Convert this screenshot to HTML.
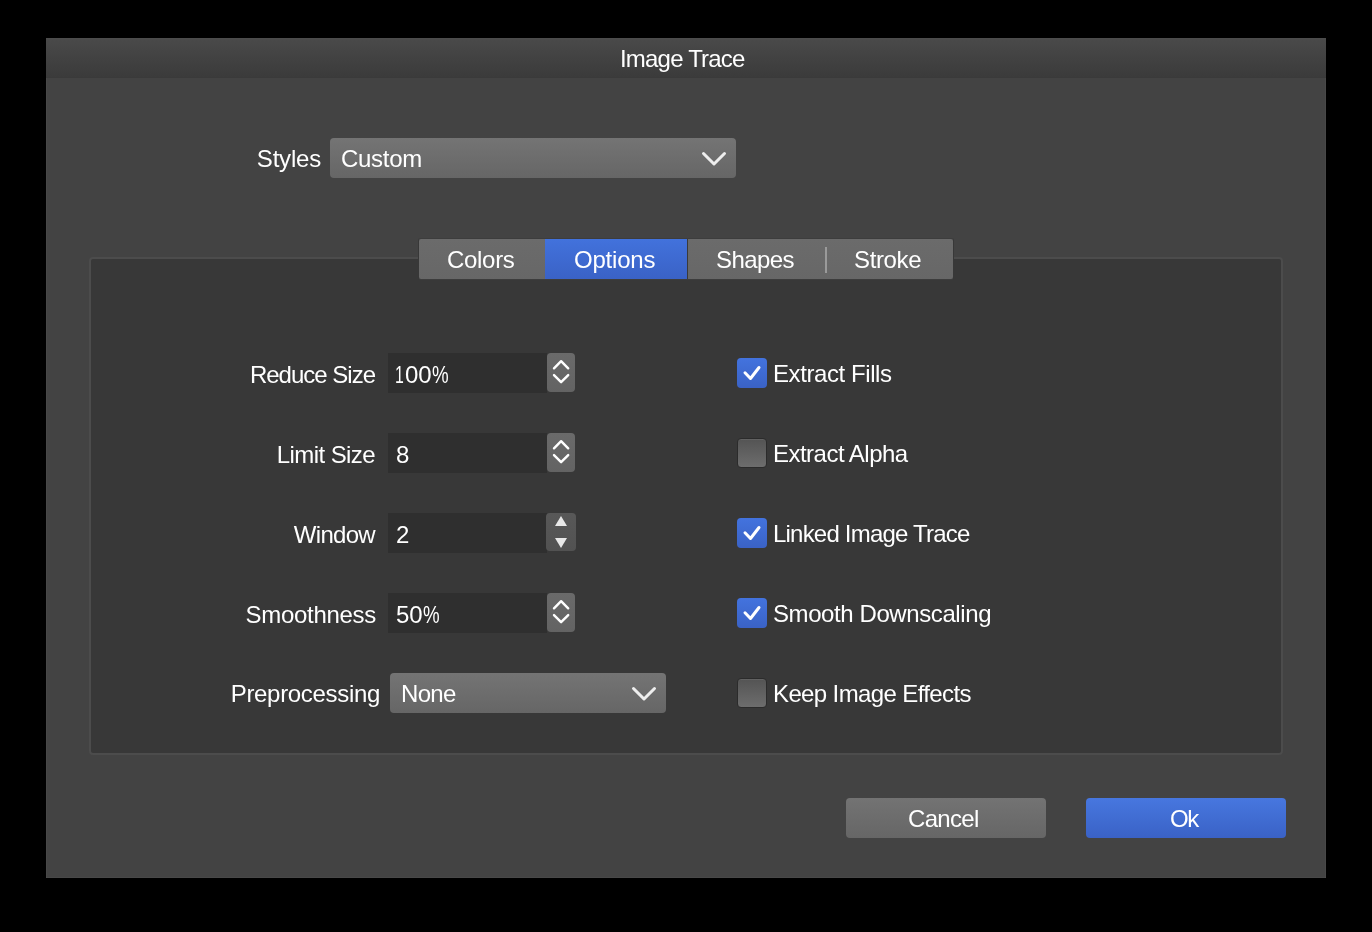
<!DOCTYPE html>
<html><head><meta charset="utf-8">
<style>
html,body{margin:0;padding:0;}
body{width:1372px;height:932px;background:#000;position:relative;overflow:hidden;font-family:"Liberation Sans",sans-serif;}
.a{position:absolute;}
.t{position:absolute;font-size:24px;line-height:40px;height:40px;color:#fff;white-space:nowrap;will-change:transform;}
.r{text-align:right;}
#win{left:46px;top:38px;width:1280px;height:840px;background:#434343;box-shadow:inset 1px 0 0 rgba(255,255,255,0.03),inset -1px 0 0 rgba(255,255,255,0.03),inset 0 -1px 0 rgba(255,255,255,0.03);}
#title{left:46px;top:38px;width:1280px;height:40px;background:linear-gradient(#4d4d4d 0px,#494949 2px,#424242 20px,#3b3b3b 39px,#393939 40px);}
.box{left:89px;top:257px;width:1190px;height:494px;border:2px solid #4c4c4c;border-radius:4px;background:#383838;}
.dd{border-radius:4px;background:linear-gradient(#747474,#666666);}
.tabs{left:418px;top:238px;width:534px;height:40px;border:1px solid #3d3d3d;border-left-color:#383838;border-right-color:#383838;border-radius:3px;background:linear-gradient(#6b6b6b,#676767);overflow:hidden;}
.field{background:#2f2f2f;}
.step{border-radius:4px;background:linear-gradient(#6a6a6a,#636363);}
.step2{border-radius:4px;background:linear-gradient(#585858,#525252);}
.cb{width:30px;height:30px;border-radius:4px;}
.on{background:linear-gradient(#4373de,#3a62c5);}
.off{width:28px;height:28px;border:1px solid #2b2b2b;background:linear-gradient(#545454,#6d6d6d);box-shadow:inset 0 1px 0 rgba(255,255,255,0.08);}
.btn{border-radius:4px;}
</style></head>
<body>
<div class="a" id="win"></div>
<div class="a" id="title"></div>
<div class="t" style="left:620px;top:39px;letter-spacing:-0.8px">Image Trace</div>

<!-- Styles row -->
<div class="t r" style="left:150px;width:171px;top:139px;letter-spacing:-0.2px">Styles</div>
<div class="a dd" style="left:330px;top:138px;width:406px;height:40px"></div>
<div class="t" style="left:341px;top:139px;letter-spacing:-0.3px">Custom</div>
<svg class="a" style="left:0;top:0" width="1372" height="932" viewBox="0 0 1372 932">
</svg>

<!-- box -->
<div class="a box"></div>

<!-- tabs -->
<div class="a tabs">
  <div class="a" style="left:126px;top:0;width:142px;height:40px;background:linear-gradient(#4272dc,#3a62c6)"></div>
  <div class="a" style="left:268px;top:0;width:1px;height:40px;background:#3a3a3a"></div>
  <div class="a" style="left:406px;top:8px;width:2px;height:26px;background:#9a9a9a"></div>
</div>
<div class="t" style="left:446.5px;top:240px;letter-spacing:-0.3px">Colors</div>
<div class="t" style="left:574px;top:240px;letter-spacing:-0.2px">Options</div>
<div class="t" style="left:716px;top:240px;letter-spacing:-0.6px">Shapes</div>
<div class="t" style="left:854px;top:240px;letter-spacing:-0.35px">Stroke</div>

<!-- fields -->
<div class="a field" style="left:388px;top:353px;width:159px;height:40px"></div>
<div class="a field" style="left:388px;top:433px;width:159px;height:40px"></div>
<div class="a field" style="left:388px;top:513px;width:159px;height:40px"></div>
<div class="a field" style="left:388px;top:593px;width:159px;height:40px"></div>
<div class="a step" style="left:547px;top:353px;width:28px;height:39px"></div>
<div class="a step" style="left:547px;top:433px;width:28px;height:39px"></div>
<div class="a step2" style="left:546px;top:513px;width:30px;height:38px"></div>
<div class="a step" style="left:547px;top:593px;width:28px;height:39px"></div>
<div class="a dd" style="left:390px;top:673px;width:276px;height:40px"></div>

<div class="t r" style="left:175px;width:200px;top:355px;letter-spacing:-1px">Reduce Size</div>
<div class="t r" style="left:175px;width:200px;top:435px;letter-spacing:-0.59px">Limit Size</div>
<div class="t r" style="left:175px;width:200px;top:515px;letter-spacing:-0.7px">Window</div>
<div class="t r" style="left:175.5px;width:200px;top:595px;letter-spacing:-0.3px">Smoothness</div>
<div class="t r" style="left:176px;width:204px;top:674px;letter-spacing:-0.32px">Preprocessing</div>

<div class="t" style="left:395px;top:355px"><span style="display:inline-block;width:10px;transform:scaleX(0.66);transform-origin:0 0">1</span>00<span style="display:inline-block;transform:scaleX(0.78);transform-origin:0 0">%</span></div>
<div class="t" style="left:396px;top:435px">8</div>
<div class="t" style="left:396px;top:515px">2</div>
<div class="t" style="left:396px;top:595px">50<span style="display:inline-block;transform:scaleX(0.78);transform-origin:0 0">%</span></div>
<div class="t" style="left:401px;top:674px;letter-spacing:-0.67px">None</div>

<!-- checkboxes -->
<div class="a cb on" style="left:737px;top:358px"></div>
<div class="a cb off" style="left:737px;top:438px"></div>
<div class="a cb on" style="left:737px;top:518px"></div>
<div class="a cb on" style="left:737px;top:598px"></div>
<div class="a cb off" style="left:737px;top:678px"></div>
<div class="t" style="left:773px;top:354px;letter-spacing:-0.42px">Extract Fills</div>
<div class="t" style="left:773px;top:434px;letter-spacing:-0.52px">Extract Alpha</div>
<div class="t" style="left:773px;top:514px;letter-spacing:-0.79px">Linked Image Trace</div>
<div class="t" style="left:773px;top:594px;letter-spacing:-0.41px">Smooth Downscaling</div>
<div class="t" style="left:773px;top:674px;letter-spacing:-0.62px">Keep Image Effects</div>

<!-- buttons -->
<div class="a btn" style="left:846px;top:798px;width:200px;height:40px;background:linear-gradient(#737373,#666666)"></div>
<div class="a btn" style="left:1086px;top:798px;width:200px;height:40px;background:linear-gradient(#4777df,#3a62c6)"></div>
<div class="t" style="left:908px;top:799px;letter-spacing:-0.7px">Cancel</div>
<div class="t" style="left:1170px;top:799px;letter-spacing:-1.5px">Ok</div>

<svg class="a" style="left:0;top:0" width="1372" height="932" viewBox="0 0 1372 932">
  <g fill="none" stroke="#eeeeee" stroke-width="3" stroke-linecap="round" stroke-linejoin="round">
    <path d="M703.5 153.5 L714 164 L724.5 153.5"/>
    <path d="M633.5 688.5 L644 699 L654.5 688.5"/>
  </g>
  <g fill="none" stroke="#ffffff" stroke-width="2.4" stroke-linecap="round" stroke-linejoin="round">
    <path d="M554 368.3 L561.1 361.2 L568.2 368.3"/>
    <path d="M554 375.1 L561.1 382.2 L568.2 375.1"/>
    <path d="M554 448.3 L561.1 441.2 L568.2 448.3"/>
    <path d="M554 455.1 L561.1 462.2 L568.2 455.1"/>
    <path d="M554 608.3 L561.1 601.2 L568.2 608.3"/>
    <path d="M554 615.1 L561.1 622.2 L568.2 615.1"/>
  </g>
  <g fill="#e8e8e8">
    <path d="M561 516 L567 526 L555 526 Z"/>
    <path d="M555 538 L567 538 L561 548 Z"/>
  </g>
  <g fill="none" stroke="#ffffff" stroke-width="3" stroke-linecap="round" stroke-linejoin="round">
    <path d="M745 372.8 L750.5 378.5 L759 367.5"/>
    <path d="M745 532.8 L750.5 538.5 L759 527.5"/>
    <path d="M745 612.8 L750.5 618.5 L759 607.5"/>
  </g>
</svg>
</body></html>
